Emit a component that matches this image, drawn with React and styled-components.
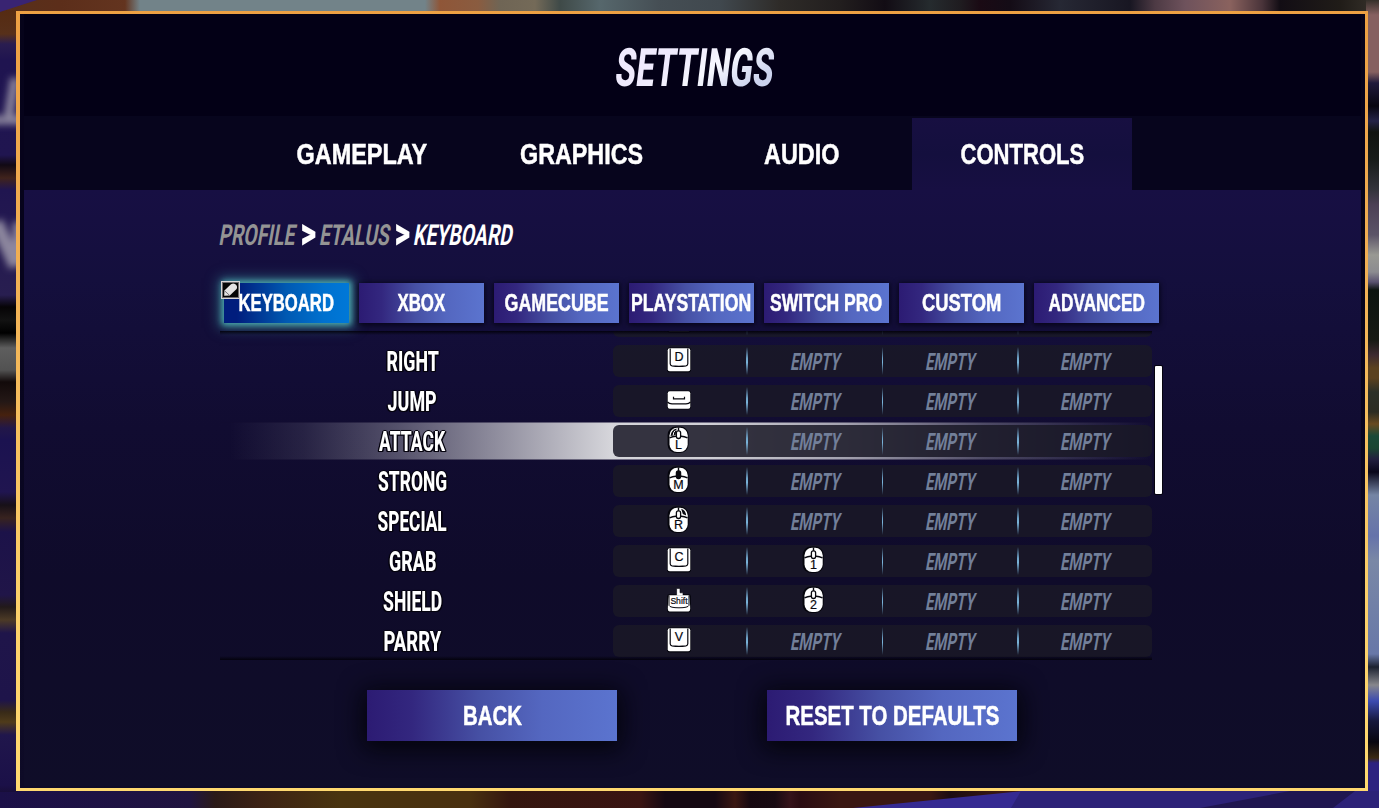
import React, { useLayoutEffect, useRef, useState } from "react";
import styled, { createGlobalStyle } from "styled-components";

const GlobalStyle = createGlobalStyle`
  * {
    box-sizing: border-box;
  }

  body {
    margin: 0;
    background: #1b1048;
    font-family: "Liberation Sans", Roboto, sans-serif;
    color: #fff;
    overflow: hidden;
  }
`;

const Screen = styled.div`
  position: relative;
  width: 1379px;
  height: 808px;
  padding: 11px 11px 17px 16px;
  overflow: hidden;
`;

const BackdropSvg = styled.svg`
  position: absolute;
  inset: 0;
`;

const Frame = styled.div`
  position: relative;
  height: 780px;
  padding: 3px 3px 3px 4px;
  background: linear-gradient(#eda043, #f0ad52 30%, #fbcf69 75%, #ffd970);
`;

const Panel = styled.div`
  height: 774px;
  padding: 0 4px;
  display: flex;
  flex-direction: column;
  background: linear-gradient(#06031a, #06031c 35%, #0b0824 75%, #0e0b27);
`;

const Header = styled.div`
  height: 102px;
  padding: 7px 0 0 4px;
  display: flex;
  align-items: center;
  justify-content: center;
  background: #030016;
`;

const Nav = styled.div`
  height: 74px;
  padding: 2px 0 0 228px;
  display: flex;
  background: #07051d;
`;

const Tab = styled.div`
  width: 220px;
  display: flex;
  align-items: center;
  justify-content: center;
  background: ${(props) =>
    props.$active ? "linear-gradient(#170f41, #140f3e 50%, #170f42)" : "none"};
`;

const Body = styled.div`
  height: 596px;
  padding: 31px 0 0 196px;
  background: linear-gradient(
    #170f43,
    #140f3d 15%,
    #110c31 40%,
    #0f0b2a 65%,
    #0f0d28
  );
`;

const Crumbs = styled.div`
  height: 30px;
  padding-bottom: 2px;
  display: flex;
  align-items: center;
  gap: 4px;
`;

const Devices = styled.div`
  display: flex;
  gap: 10px;
  margin: 32px 0 0 4px;
`;

const Device = styled.div`
  position: relative;
  width: 125px;
  height: 40px;
  display: flex;
  align-items: center;
  justify-content: center;
  background: ${(props) =>
    props.$active
      ? "linear-gradient(90deg, #001d7d 10%, #0059b2 50%, #0071cf 80%, #0078d8)"
      : "linear-gradient(90deg, #2c1b73, #33277f 18%, #4650a4 45%, #5467c0 70%, #5b74cf)"};
  box-shadow: ${(props) =>
    props.$active
      ? "0 0 6px 2px #4ba9ae, 0 0 12px 5px rgba(66, 160, 170, 0.55)"
      : "0 1px 5px 1px rgba(3, 2, 12, 0.75)"};
`;

const EditBadge = styled.svg`
  position: absolute;
  left: -3px;
  top: -2px;
`;

const ListArea = styled.div`
  display: flex;
  margin-top: 8px;
  height: 329px;
`;

const Viewport = styled.div`
  position: relative;
  width: 932px;
  height: 329px;
  overflow: hidden;

  &::before,
  &::after {
    content: "";
    position: absolute;
    left: 0;
    right: 0;
    height: 4px;
    background: linear-gradient(rgba(2, 1, 10, 0.9), rgba(2, 1, 10, 0));
  }

  &::before {
    top: 0;
  }

  &::after {
    bottom: 0;
    transform: scaleY(-1);
  }
`;

const Rows = styled.div`
  margin-top: -30px;
`;

const Row = styled.div`
  height: 38px;
  margin: 1px 0 2px;
  display: flex;
  align-items: center;
  background: ${(props) =>
    props.$active
      ? `linear-gradient(90deg, rgba(220, 220, 224, 0) 1%, rgba(220, 220, 224, 0.11) 9%,
        rgba(220, 220, 224, 0.33) 19%, rgba(220, 220, 224, 0.66) 31%,
        rgba(220, 220, 224, 0.97) 42%, rgba(220, 220, 224, 0.95) 52%,
        rgba(220, 220, 224, 0.72) 67%, rgba(220, 220, 224, 0.3) 82%,
        rgba(220, 220, 224, 0))`
      : "none"};
  box-shadow: ${(props) =>
    props.$active
      ? "inset 0 1px rgba(18, 12, 48, 0.5), inset 0 -1px rgba(18, 12, 48, 0.5)"
      : "none"};
`;

const Label = styled.div`
  width: 385px;
  margin-right: 8px;
  display: flex;
  justify-content: center;
`;

const Slots = styled.div`
  width: 539px;
  height: 32px;
  display: flex;
  border-radius: 6px;
  background: rgba(26, 25, 38, 0.86);
`;

const Slot = styled.div`
  width: 134.75px;
  display: flex;
  align-items: center;
  justify-content: center;
  padding: ${(props) => (props.$bound ? "0 2px 2px 0" : "0 0 0 2px")};
`;

const dividerMargins = {
  1: "2px 0 0 -2px",
  2: "2px 0 0 -1px",
  3: "2px -2px 0 0",
};

const Divider = styled.div`
  flex-shrink: 0;
  width: ${(props) => (props.$place === 2 ? 1 : 2)}px;
  height: 28px;
  margin: ${(props) => dividerMargins[props.$place]};
  background: linear-gradient(
    rgba(125, 185, 222, 0),
    #6fa3c8 40%,
    #7ab4da 55%,
    rgba(125, 185, 222, 0)
  );
`;

const ScrollThumb = styled.div`
  width: 7px;
  height: 128px;
  margin: 35px 0 0 3px;
  border-radius: 1px;
  background: #fdfdff;
  box-shadow: 0 0 0 1px #05030f;
`;

const Actions = styled.div`
  display: flex;
  gap: 150px;
  margin: 30px 0 0 147px;
`;

const ActionButton = styled.div`
  width: 250px;
  height: 51px;
  display: flex;
  align-items: center;
  justify-content: center;
  background: linear-gradient(
    90deg,
    #2c1b73,
    #33277f 18%,
    #4650a4 45%,
    #5467c0 70%,
    #5b74cf
  );
  box-shadow: 0 4px 24px 4px rgba(3, 3, 10, 0.95);
`;

const TextBox = styled.span`
  display: flex;
  justify-content: center;
  flex-shrink: 0;
  width: ${(props) => props.$width}px;
  margin-top: ${(props) => props.$drop}px;
`;

const Glyphs = styled.span`
  flex-shrink: 0;
  white-space: pre;
  line-height: 1;
  font-family: ${(props) =>
    props.$display
      ? 'Roboto, "Liberation Sans", sans-serif'
      : '"Liberation Sans", Roboto, sans-serif'};
  font-size: ${(props) => props.$size}px;
  font-weight: ${(props) => props.$weight};
  color: ${(props) => props.$color};
  -webkit-text-stroke: ${(props) => (props.$display ? 0 : 0.5)}px;
  ${(props) =>
    props.$outline &&
    `text-shadow: -2px 0 #06040f, 2px 0 #06040f, 0 -1px #06040f, 0 1px #06040f,
      2px 1px #06040f, -2px 1px #06040f, 0 0 2px #06040f;`}
  ${(props) =>
    props.$shine &&
    `background: linear-gradient(155deg, #efeafd 35%, #f6f7fe 58%, #ccd3ee 85%);
     background-clip: text;
     -webkit-background-clip: text;`}
`;

// Squeezes its text horizontally so it fills the given width.
const FitText = ({
  children,
  width,
  size,
  slant = 0,
  weight = 700,
  color = "#fff",
  drop = 0,
  display,
  outline,
  shine,
}) => {
  const ref = useRef(null);
  const [scale, setScale] = useState(1);

  useLayoutEffect(() => {
    setScale(width / ref.current.offsetWidth);
  }, [width, children]);

  return (
    <TextBox $width={width} $drop={drop}>
      <Glyphs
        ref={ref}
        $size={size}
        $weight={weight}
        $color={shine ? "transparent" : color}
        $display={display}
        $outline={outline}
        $shine={shine}
        style={{ transform: `skewX(${-slant}deg) scaleX(${scale})` }}
      >
        {children}
      </Glyphs>
    </TextBox>
  );
};

const KeyIcon = ({ label }) => (
  <svg width="26" height="26" viewBox="0 0 26 26">
    <rect x="1" y="0.5" width="24" height="25" rx="3" fill="#05050c" />
    <rect x="1.7" y="1.3" width="22.6" height="23" rx="2" fill="#fff" />
    <path
      d="M4.2 1.5V16.8Q4.2 18.6 6 18.9Q13 19.9 20 18.9Q21.8 18.6 21.8 16.8V1.5"
      fill="none"
      stroke="#08080f"
      strokeWidth="1.2"
    />
    {label && (
      <text
        x="13"
        y="14.3"
        textAnchor="middle"
        fontFamily="Liberation Sans"
        fontSize="12.5"
        fill="#08080f"
        stroke="#08080f"
        strokeWidth="0.2"
      >
        {label}
      </text>
    )}
  </svg>
);

const SpaceIcon = () => (
  <svg width="26" height="26" viewBox="0 0 26 26">
    <rect x="1" y="3.5" width="24" height="19" rx="3" fill="#05050c" />
    <rect x="1.7" y="4.3" width="22.6" height="17.4" rx="2" fill="#fff" />
    <path
      d="M1.5 15Q3 16.7 6 16.8H20Q23 16.7 24.5 15M7.5 9.8V11.8H18.5V9.8"
      fill="none"
      stroke="#08080f"
      strokeWidth="1.2"
    />
  </svg>
);

const ShiftIcon = () => (
  <svg width="26" height="28" viewBox="0 0 26 28">
    <rect x="1.2" y="8.2" width="23.6" height="18.2" rx="2" fill="#05050c" />
    <path
      d="M10.6 2.4H14V6.8H17V9.8H10.6Z"
      fill="#fff"
      stroke="#05050c"
      strokeWidth="0.6"
    />
    <path
      d="M2.8 9.2H23.2Q24 14 24.2 23Q24.2 25.4 22.5 25.4H3.5Q1.8 25.4 1.8 23Q2 14 2.8 9.2Z"
      fill="#fff"
    />
    <path
      d="M3 9.4V19.4Q4 21.8 13 21.8Q22 21.8 23 19.4V9.4"
      fill="none"
      stroke="#08080f"
      strokeWidth="1"
    />
    <text
      x="13"
      y="18.2"
      textAnchor="middle"
      fontFamily="Liberation Sans"
      fontSize="8.6"
      fill="#08080f"
      stroke="#08080f"
      strokeWidth="0.2"
    >
      Shift
    </text>
  </svg>
);

const MouseIcon = ({ label, side }) => (
  <svg width="24" height="28" viewBox="0 0 24 28">
    <rect x="0.6" y="0.6" width="21" height="26.4" rx="8.5" fill="#05050c" />
    <rect x="2.5" y="1.8" width="18.2" height="24.2" rx="7.5" fill="#fff" />
    {side === "left" && (
      <>
        <path d="M3.6 10Q4 4.2 9.6 2.6L8.6 9Z" fill="#08080f" />
        <path d="M6.2 9Q6.2 6 8.4 4.4" stroke="#fff" strokeWidth="1" fill="none" />
      </>
    )}
    {side === "right" && (
      <path d="M14.2 2.8Q18.6 4.2 19.2 9.4L15.8 8Z" fill="#08080f" />
    )}
    <path
      d="M2.5 11.8Q6 10 9.5 10.2M13.5 10.2Q17 10 20.5 11.8M11.5 1.5V5M11.5 12V13.2"
      fill="none"
      stroke="#08080f"
      strokeWidth="1.4"
    />
    <rect
      x="9.4"
      y="4.8"
      width="4.2"
      height="7.6"
      rx="2"
      fill={side === "middle" ? "#08080f" : "#fff"}
      stroke="#08080f"
      strokeWidth="1.3"
    />
    <text
      x="11.5"
      y="23.4"
      textAnchor="middle"
      fontFamily="Liberation Sans"
      fontSize="12.5"
      fill="#08080f"
      stroke="#08080f"
      strokeWidth="0.2"
    >
      {label}
    </text>
  </svg>
);

const PencilIcon = () => (
  <EditBadge width="19" height="18" viewBox="0 0 19 18">
    <rect width="19" height="18" fill="#d9d6d6" />
    <rect x="1" y="1" width="17" height="16" fill="#6e6a6c" />
    <rect x="2" y="2" width="15" height="14" fill="#050505" />
    <path
      d="M3.2 14.8L3.4 9.6L10 3.2Q12.4 1.6 14.4 3.2Q17 5.4 15.6 8L8.8 14.6Z"
      fill="#e4e2e2"
    />
    <path d="M3.6 9.8L8.6 14.4" stroke="#77747a" strokeWidth="1" />
  </EditBadge>
);

const Backdrop = () => {
  const left = [
    [0, "#55290f"], [34, "#57301a"], [44, "#2a1d50"], [60, "#1f1450"],
    [155, "#201550"], [165, "#110914"], [178, "#40231c"], [190, "#201550"],
    [295, "#281e50"], [307, "#060406"], [320, "#121212"], [333, "#000"],
    [348, "#5e5e5e"], [370, "#525252"], [382, "#120a0a"], [402, "#241816"],
    [415, "#46210e"], [428, "#221748"], [440, "#1b1250"], [492, "#201550"],
    [505, "#171018"], [518, "#38231f"], [532, "#1c1249"], [595, "#201548"],
    [607, "#221a1a"], [620, "#4c3a26"], [633, "#1f154a"], [700, "#1e144a"],
    [712, "#382a18"], [722, "#4f3b1a"], [735, "#20164c"], [785, "#1b1048"],
    [808, "#100818"],
  ];
  const right = [
    [0, "#35302a"], [15, "#866060"], [72, "#866060"], [83, "#201a3c"],
    [106, "#080610"], [121, "#242347"], [132, "#10130f"], [160, "#181c1a"],
    [190, "#34343c"], [205, "#4c4055"], [235, "#5c5468"], [255, "#999993"],
    [272, "#8c8c90"], [282, "#5a5270"], [290, "#0c140f"], [340, "#171a14"],
    [355, "#3e2a30"], [368, "#5c421f"], [378, "#5c421f"], [392, "#2c3028"],
    [412, "#2c2c22"], [424, "#684a20"], [436, "#1b4a38"], [448, "#1b4632"],
    [459, "#22203f"], [472, "#09071a"], [495, "#7585a4"], [536, "#6673aa"],
    [560, "#7a88a6"], [654, "#6878a8"], [667, "#1c2230"], [685, "#87878c"],
    [701, "#3c4bb0"], [721, "#16183c"], [742, "#08060f"], [758, "#3b2a12"],
    [763, "#2e2280"], [808, "#2e2280"],
  ];
  const top = [
    [0, "#57301a"], [60, "#5c2e1a"], [125, "#63341f"], [140, "#728389"],
    [425, "#728389"], [440, "#8f5638"], [478, "#8a5c40"], [500, "#6f6555"],
    [535, "#746a58"], [560, "#3f4a48"], [600, "#56676c"], [660, "#454e54"],
    [720, "#40484e"], [780, "#2e2b28"], [840, "#221e1e"], [885, "#120c14"],
    [930, "#252b2e"], [960, "#1f1c20"], [980, "#1a0a14"], [1010, "#140c16"],
    [1060, "#262834"], [1130, "#181622"], [1155, "#4d3a44"], [1185, "#6e525c"],
    [1230, "#8a625e"], [1262, "#4a343a"], [1280, "#120d14"], [1340, "#201c18"],
    [1379, "#38332c"],
  ];
  const bottom = [
    [0, "#1b1048"], [190, "#201440"], [215, "#2a1a18"], [260, "#3c2214"],
    [340, "#49340f"], [470, "#49300f"], [510, "#34160f"], [640, "#3a1412"],
    [665, "#150812"], [715, "#150812"], [735, "#3a1712"], [750, "#160810"],
    [775, "#180a12"], [790, "#35131a"], [800, "#2a0c12"], [840, "#3a1712"],
    [930, "#3a1712"], [950, "#1c0c12"], [1000, "#3a1712"], [1379, "#2a2070"],
  ];
  const strips = [
    { id: "top", stops: top, x: 0, y: 0, w: 1379, h: 12 },
    { id: "bottom", stops: bottom, x: 0, y: 790, w: 1379, h: 18 },
    { id: "left", stops: left, x: 0, y: 10, w: 18, h: 782 },
    { id: "right", stops: right, x: 1366, y: 0, w: 13, h: 808 },
  ];
  return (
    <BackdropSvg width="1379" height="808" viewBox="0 0 1379 808">
      <defs>
        <filter id="soft" x="-50%" y="-50%" width="200%" height="200%">
          <feGaussianBlur stdDeviation="3.5" />
        </filter>
        {strips.map(({ id, stops }) => {
          const vertical = id === "left" || id === "right";
          return (
            <linearGradient
              key={id}
              id={id}
              gradientUnits="userSpaceOnUse"
              x1="0"
              y1="0"
              x2={vertical ? 0 : 1379}
              y2={vertical ? 808 : 0}
            >
              {stops.map(([at, color]) => (
                <stop
                  key={at}
                  offset={at / (vertical ? 808 : 1379)}
                  stopColor={color}
                />
              ))}
            </linearGradient>
          );
        })}
      </defs>
      {strips.map(({ id, x, y, w, h }) => (
        <rect key={id} x={x} y={y} width={w} height={h} fill={`url(#${id})`} />
      ))}
      <g fill="none" stroke="#8c869e" strokeWidth="9" filter="url(#soft)">
        <path d="M-8 120H3M15 78L8 120H24" />
        <path d="M-4 222L16 266M20 222V266" strokeWidth="14" />
      </g>
      <path d="M0 0H37L0 12Z" fill="#392472" />
      <path d="M853 808L1023 791H1379V808Z" fill="#352a92" />
      <path d="M1011 808L1021 791H1379V808Z" fill="#2c2278" />
      <path d="M1200 808L1290 791H1355L1333 808Z" fill="#1f1650" />
    </BackdropSvg>
  );
};

const tabs = [
  { name: "GAMEPLAY", width: 131 },
  { name: "GRAPHICS", width: 123 },
  { name: "AUDIO", width: 75 },
  { name: "CONTROLS", width: 124, active: true },
];

const devices = [
  { name: "KEYBOARD", width: 95, active: true },
  { name: "XBOX", width: 48 },
  { name: "GAMECUBE", width: 104 },
  { name: "PLAYSTATION", width: 120 },
  { name: "SWITCH PRO", width: 112 },
  { name: "CUSTOM", width: 79 },
  { name: "ADVANCED", width: 96 },
];

const bindings = [
  { name: "RIGHT", width: 52, keys: [<KeyIcon label="D" />] },
  { name: "JUMP", width: 49, keys: [<SpaceIcon />] },
  {
    name: "ATTACK",
    width: 66,
    active: true,
    keys: [<MouseIcon label="L" side="left" />],
  },
  { name: "STRONG", width: 69, keys: [<MouseIcon label="M" side="middle" />] },
  { name: "SPECIAL", width: 69, keys: [<MouseIcon label="R" side="right" />] },
  {
    name: "GRAB",
    width: 47,
    keys: [<KeyIcon label="C" />, <MouseIcon label="1" />],
  },
  { name: "SHIELD", width: 59, keys: [<ShiftIcon />, <MouseIcon label="2" />] },
  { name: "PARRY", width: 58, keys: [<KeyIcon label="V" />] },
];

const BindingRow = ({ name, width, active, keys, hidden }) => (
  <Row $active={active}>
    <Label>
      {!hidden && (
        <FitText width={width} size={27} weight={800} drop={3} display outline>
          {name}
        </FitText>
      )}
    </Label>
    <Slots>
      {[0, 1, 2, 3].map((i) => (
        <React.Fragment key={i}>
          {i > 0 && <Divider $place={i} />}
          <Slot $bound={Boolean(keys[i])}>
            {keys[i] ||
              (!hidden && (
                <FitText
                  width={49}
                  size={24}
                  slant={10}
                  drop={2}
                  color="#727f99"
                  display
                >
                  EMPTY
                </FitText>
              ))}
          </Slot>
        </React.Fragment>
      ))}
    </Slots>
  </Row>
);

const App = () => {
  return (
    <>
      <GlobalStyle />
      <Screen>
        <Backdrop />
        <Frame>
          <Panel>
            <Header>
              <FitText width={158} size={53} slant={7} weight={800} display shine>
                SETTINGS
              </FitText>
            </Header>
            <Nav>
              {tabs.map((tab) => (
                <Tab key={tab.name} $active={tab.active}>
                  <FitText width={tab.width} size={29} drop={1}>
                    {tab.name}
                  </FitText>
                </Tab>
              ))}
            </Nav>
            <Body>
              <Crumbs>
                <FitText width={76} size={29} slant={10} color="#949494" display>
                  PROFILE
                </FitText>
                <FitText width={16} size={44} weight={900} drop={-4} display>
                  &gt;
                </FitText>
                <FitText width={70} size={29} slant={10} color="#949494" display>
                  ETALUS
                </FitText>
                <FitText width={16} size={44} weight={900} drop={-4} display>
                  &gt;
                </FitText>
                <FitText width={99} size={29} slant={10} display>
                  KEYBOARD
                </FitText>
              </Crumbs>
              <Devices>
                {devices.map((device) => (
                  <Device key={device.name} $active={device.active}>
                    <FitText width={device.width} size={23.5} drop={2}>
                      {device.name}
                    </FitText>
                    {device.active && <PencilIcon />}
                  </Device>
                ))}
              </Devices>
              <ListArea>
                <Viewport>
                  <Rows>
                    <BindingRow keys={[<KeyIcon />]} hidden />
                    {bindings.map((binding) => (
                      <BindingRow key={binding.name} {...binding} />
                    ))}
                  </Rows>
                </Viewport>
                <ScrollThumb />
              </ListArea>
              <Actions>
                <ActionButton>
                  <FitText width={59} size={28} drop={1}>
                    BACK
                  </FitText>
                </ActionButton>
                <ActionButton>
                  <FitText width={214} size={28} drop={1}>
                    RESET TO DEFAULTS
                  </FitText>
                </ActionButton>
              </Actions>
            </Body>
          </Panel>
        </Frame>
      </Screen>
    </>
  );
};

export default App;
